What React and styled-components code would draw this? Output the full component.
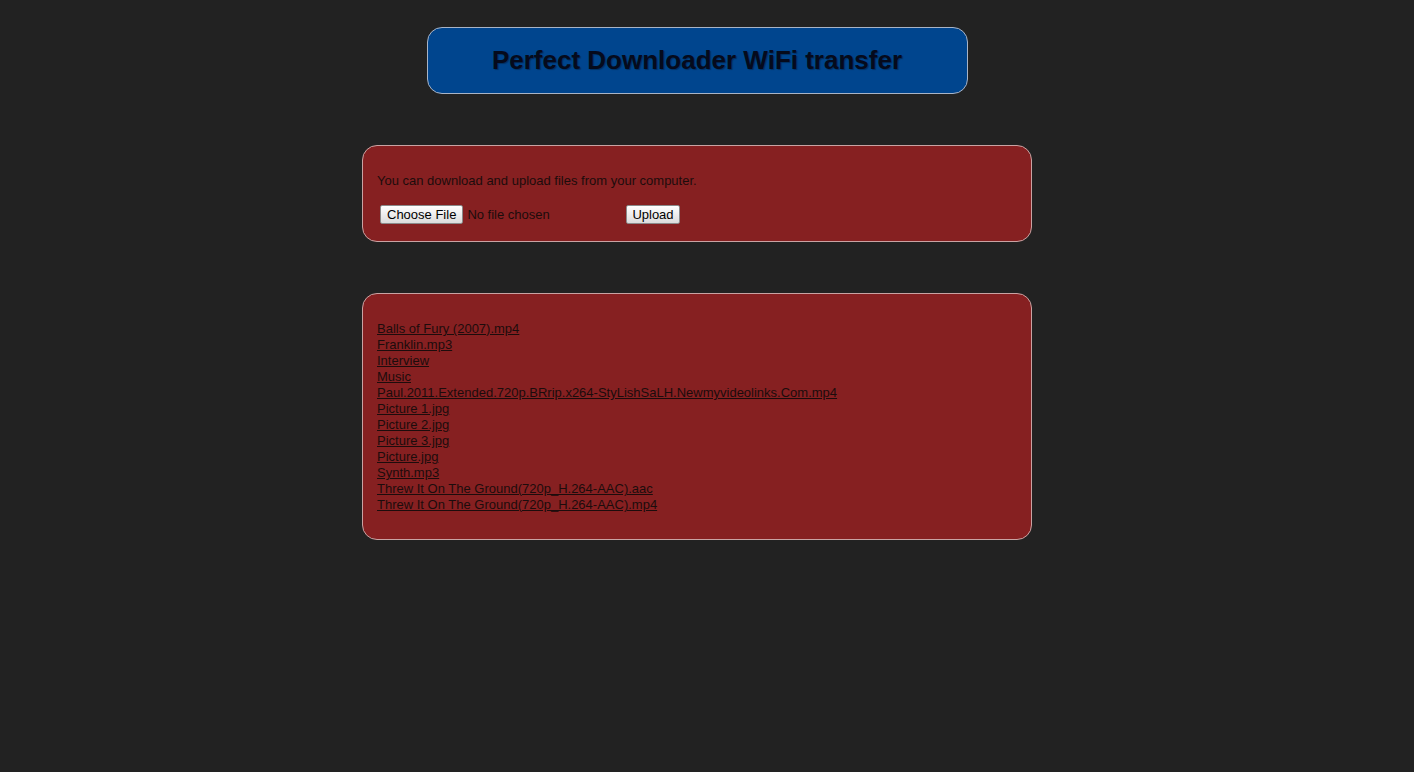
import React from "react";
import styled, { createGlobalStyle } from "styled-components";

const Global = createGlobalStyle`
  html, body { margin: 0; padding: 0; background: #222222; }
  body { font-family: "Liberation Sans", Arial, sans-serif; }
`;

const Page = styled.div`
  width: 1394px;
  padding-top: 27px;
  display: flex;
  flex-direction: column;
  align-items: center;
  gap: 51px;
`;

const Header = styled.div`
  box-sizing: border-box;
  width: 541px;
  height: 67px;
  background: #00458e;
  border: 1px solid #a9b4c6;
  border-radius: 15px;
  display: flex;
  align-items: center;
  justify-content: center;
`;

const Title = styled.h1`
  margin: 0;
  font-size: 26px;
  font-weight: bold;
  color: #050a1c;
  text-shadow: 1px 1px 1px rgba(0, 0, 0, 0.3);
`;

const Panel = styled.div`
  box-sizing: border-box;
  width: 670px;
  height: ${(p) => p.$h}px;
  background: #862021;
  border: 1px solid #c9a3a3;
  border-radius: 15px;
  padding: ${(p) => p.$pt}px 14px 0 14px;
  color: #1c0c0c;
  font-size: 13px;
`;

const Intro = styled.p`
  margin: 0 0 17px 0;
  line-height: 15px;
`;

const Row = styled.div`
  display: flex;
  align-items: center;
  padding-left: 3px;
`;

const Button = styled.button`
  font-family: "Liberation Sans", Arial, sans-serif;
  font-size: 13px;
  color: #000;
  height: 19px;
  padding: 0 ${(p) => p.$px || 6}px;
  background: linear-gradient(#ffffff, #dcdcdc);
  border: 1px solid #8a8a8a;
  border-radius: 2px;
  line-height: 17px;
`;

const FileName = styled.span`
  width: 159px;
  margin-left: 4px;
  color: #1c0c0c;
`;

const List = styled.div`
  display: flex;
  flex-direction: column;
  align-items: flex-start;
`;

const FileLink = styled.a`
  color: #1c0c0c;
  text-decoration: underline;
  line-height: 16px;
  font-size: 13px;
`;

const files = [
  "Balls of Fury (2007).mp4",
  "Franklin.mp3",
  "Interview",
  "Music",
  "Paul.2011.Extended.720p.BRrip.x264-StyLishSaLH.Newmyvideolinks.Com.mp4",
  "Picture 1.jpg",
  "Picture 2.jpg",
  "Picture 3.jpg",
  "Picture.jpg",
  "Synth.mp3",
  "Threw It On The Ground(720p_H.264-AAC).aac",
  "Threw It On The Ground(720p_H.264-AAC).mp4",
];

export default function App() {
  return (
    <>
      <Global />
      <Page>
        <Header>
          <Title>Perfect Downloader WiFi transfer</Title>
        </Header>
        <Panel $h={97} $pt={27}>
          <Intro>You can download and upload files from your computer.</Intro>
          <Row>
            <Button>Choose File</Button>
            <FileName>No file chosen</FileName>
            <Button $px={5}>Upload</Button>
          </Row>
        </Panel>
        <Panel $h={247} $pt={27}>
          <List>
            {files.map((f) => (
              <FileLink key={f} href="#">
                {f}
              </FileLink>
            ))}
          </List>
        </Panel>
      </Page>
    </>
  );
}
